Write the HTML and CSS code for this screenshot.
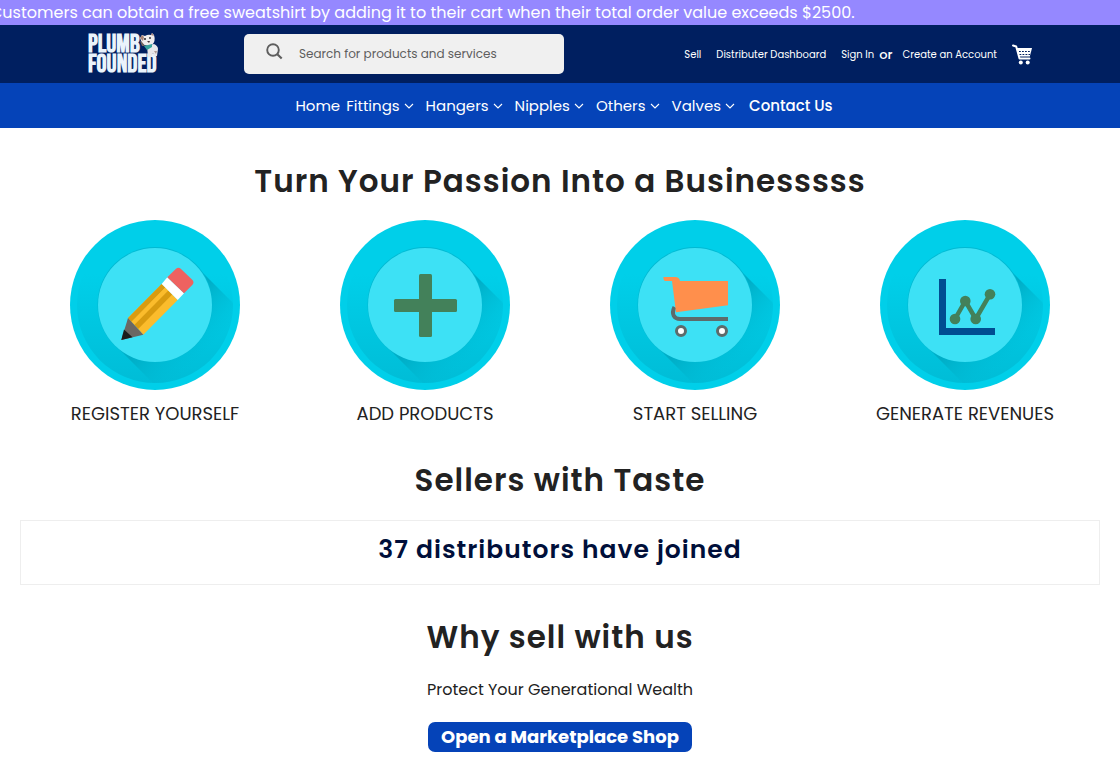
FILE: index.html
```html
<!DOCTYPE html>
<html lang="en">
<head>
<meta charset="utf-8">
<meta name="viewport" content="width=device-width, initial-scale=1">
<title>Plumb Founded</title>
<link rel="stylesheet" href="styles.css">
</head>
<body>
<svg class="defs" aria-hidden="true">
  <defs>
    <linearGradient id="ring" x1="0" y1="0" x2="0" y2="1">
      <stop offset="0.3" stop-color="#00cfe9"/>
      <stop offset="1" stop-color="#00bdd7"/>
    </linearGradient>
    <linearGradient id="shade" gradientUnits="userSpaceOnUse" x1="85" y1="85" x2="134" y2="134">
      <stop offset="0.3" stop-color="#00adc6"/>
      <stop offset="1" stop-color="#00bdd7" stop-opacity="0"/>
    </linearGradient>
    <clipPath id="rim"><circle cx="85" cy="85" r="78"/></clipPath>
    <symbol id="disc" viewBox="0 0 170 170">
      <circle cx="85" cy="85" r="85" fill="#00cfe9"/>
      <circle cx="85" cy="85" r="78" fill="url(#ring)"/>
      <path d="M125 45L185 105V185H105L45 125Z" fill="url(#shade)" clip-path="url(#rim)"/>
      <circle cx="85" cy="84.500" r="57.500" fill="#00b9d2"/>
      <circle cx="85" cy="85" r="57" fill="#3de1f5"/>
    </symbol>
    <symbol id="chevron" viewBox="0 0 10 6">
      <path d="M1 1L5 5L9 1" fill="none" stroke="currentColor" stroke-width="1.100"/>
    </symbol>
  </defs>
</svg>

<p class="promo">Customers can obtain a free sweatshirt by adding it to their cart when their total order value exceeds $2500.</p>

<header class="header">
  <a class="logo" href="#" aria-label="Plumb Founded">
    <span>PLUMB</span>
    <span>FOUNDED</span>
    <svg class="mascot" viewBox="0 0 20 24" aria-hidden="true">
      <path d="M8 13L15 11Q19 13 19 16L18 23H15L14 20L12 24H9Z" fill="#e9e7ea"/>
      <path d="M1 5L3 2L6 3Q9 1 12 2L13 0L15 2Q17 8 13 12Q6 14 3 10Z" fill="#f1eded"/>
      <path d="M1 5L3 2L5 4L4 8ZM12 2L13 0L15 3Z" fill="#a98375"/>
      <path d="M1 8L3 9L6 13L3 13Z" fill="#776761"/>
      <path d="M5 13L13 11L13 14L8 17Z" fill="#38a39c"/>
      <path d="M15 18L18 18L17 21Z" fill="#ae9b94"/>
      <circle cx="6" cy="6" r="1" fill="#26242a"/>
      <circle cx="11" cy="5" r=".9" fill="#26242a"/>
      <path d="M8 8L11 8L10 10Z" fill="#443238"/>
    </svg>
  </a>
  <form class="search" role="search">
    <label class="search-label" for="q" aria-label="Search">
      <svg viewBox="0 0 17 17" aria-hidden="true"><circle cx="7" cy="7" r="5.800" fill="none" stroke="#5e5e5e" stroke-width="1.900"/><path d="M11.300 11.300L15.700 15.500" stroke="#5e5e5e" stroke-width="2.200"/></svg>
    </label>
    <input class="search-input" id="q" type="search" placeholder="Search for products and services">
  </form>
  <div class="account">
    <a href="#">Sell</a>
    <a href="#">Distributer Dashboard</a>
    <span class="sign"><a href="#">Sign In</a><span class="or">or</span><a href="#">Create an Account</a></span>
    <a class="cart" href="#" aria-label="Cart">
      <svg viewBox="0 0 20 21" aria-hidden="true">
        <path d="M1 1.500L4.200 2.500L7.500 14.500H17.500" fill="none" stroke="#fff" stroke-width="2" stroke-linecap="round" stroke-linejoin="round"/>
        <path d="M4.500 4H20L17.800 12.500H7Z" fill="#fff"/>
        <path d="M7 7.500H18.500M7.500 10.500H18" stroke="#001f60" stroke-width="1" stroke-dasharray="1.800 1.200"/>
        <circle cx="8.800" cy="18.500" r="2" fill="#fff"/><circle cx="15.700" cy="18.500" r="2" fill="#fff"/>
      </svg>
    </a>
  </div>
</header>

<nav class="nav" aria-label="Main">
  <a class="home" href="#">Home</a>
  <button type="button">Fittings<svg viewBox="0 0 10 6"><use href="#chevron"/></svg></button>
  <button type="button">Hangers<svg viewBox="0 0 10 6"><use href="#chevron"/></svg></button>
  <button type="button">Nipples<svg viewBox="0 0 10 6"><use href="#chevron"/></svg></button>
  <button type="button">Others<svg viewBox="0 0 10 6"><use href="#chevron"/></svg></button>
  <button type="button">Valves<svg viewBox="0 0 10 6"><use href="#chevron"/></svg></button>
  <a class="contact" href="#">Contact Us</a>
</nav>

<main class="main">
  <h1 class="title">Turn Your Passion Into a Businesssss</h1>
  <ul class="steps">
    <li class="step">
      <svg viewBox="0 0 170 170" aria-hidden="true">
        <use href="#disc"/>
        <path d="M58 98L91.700 64L107.700 80L73.300 114.700Z" fill="#fbbc2c"/>
        <path d="M58 98L91.700 64L95.300 67.600L61.600 101.800Z" fill="#d99b10"/>
        <path d="M61.600 101.800L95.300 67.600L98.300 70.600L64.500 104.800Z" fill="#fbbc2c"/>
        <path d="M64.500 104.800L98.300 70.600L102.200 74.500L68.200 108.900Z" fill="#d99b10"/>
        <path d="M58 98L73.300 114.700L51.300 120Z" fill="#6b6763"/>
        <path d="M54 109.500L62.500 117.300L51.300 120Z" fill="#1c1c1a"/>
        <path d="M91.700 64L97.300 57.300L114 73.300L107.700 80Z" fill="#fff"/>
        <path d="M97.300 57.300L106 48.700Q108.700 46.700 111 49L122.500 60Q124.500 62.500 122.500 64.700L114 73.300Z" fill="#ee6260"/>
      </svg>
      REGISTER YOURSELF
    </li>
    <li class="step">
      <svg viewBox="0 0 170 170" aria-hidden="true">
        <use href="#disc"/>
        <rect x="79" y="54" width="13" height="63" rx="1.500" fill="#43815a"/>
        <rect x="54" y="79" width="63" height="13" rx="1.500" fill="#43815a"/>
      </svg>
      ADD PRODUCTS
    </li>
    <li class="step">
      <svg viewBox="0 0 170 170" aria-hidden="true">
        <use href="#disc"/>
        <path d="M64.500 87C61 94 64 99 70 99H118" fill="none" stroke="#5d6b6b" stroke-width="4"/>
        <path d="M53.300 57H66Q69.500 57.500 70 61H118V85.300L66 92.300L62 61H55Q53.300 60 53.300 57Z" fill="#ff8f4c"/>
        <circle cx="71" cy="111" r="4.500" fill="#fff" stroke="#5d6b6b" stroke-width="3"/>
        <circle cx="112" cy="111" r="4.500" fill="#fff" stroke="#5d6b6b" stroke-width="3"/>
      </svg>
      START SELLING
    </li>
    <li class="step">
      <svg viewBox="0 0 170 170" aria-hidden="true">
        <use href="#disc"/>
        <path d="M59 59H66V108H115V115H59Z" fill="#004d91"/>
        <path d="M75 99L85.300 81L95.700 99L110 74.300" fill="none" stroke="#43815a" stroke-width="4.500"/>
        <g fill="#43815a"><circle cx="75" cy="99" r="5.300"/><circle cx="85.300" cy="81" r="5.300"/><circle cx="95.700" cy="99" r="5.300"/><circle cx="110" cy="74.300" r="5.300"/></g>
      </svg>
      GENERATE REVENUES
    </li>
  </ul>

  <h2 class="title">Sellers with Taste</h2>
  <p class="joined">37 distributors have joined</p>

  <h2 class="title">Why sell with us</h2>
  <p class="tagline">Protect Your Generational Wealth</p>
  <button class="open-shop" type="button">Open a Marketplace Shop</button>
</main>
</body>
</html>
```

FILE: styles.css
```css
* {
  box-sizing: border-box;
}

body {
  margin: 0;
  background: #fff;
  color: #222;
  font-family: Poppins, Inter, "Open Sans", sans-serif;
}

a {
  color: inherit;
  text-decoration: none;
}

button,
input {
  font-family: inherit;
}

button {
  border: 0;
  color: #fff;
  cursor: pointer;
}

.defs {
  position: absolute;
  width: 0;
  height: 0;
}

.promo {
  margin: 0;
  overflow: hidden;
  background: #9588ff;
  color: #fff;
  font-size: 16px;
  line-height: 25px;
  text-indent: -10px;
  white-space: nowrap;
}

.header {
  display: flex;
  align-items: center;
  padding: 8px 88px;
  background: #001f60;
  color: #fff;
}

.logo {
  position: relative;
  display: flex;
  flex-direction: column;
  flex: none;
  width: 72px;
  margin-right: 84px;
  padding-top: 2px;
  color: #eaf3fb;
  font-family: "Bebas Neue", "Liberation Sans Narrow", sans-serif;
  font-size: 25px;
  font-weight: 700;
  line-height: 20px;
}

.mascot {
  position: absolute;
  top: 0;
  right: 1px;
  width: 20px;
  height: 24px;
}

.search {
  display: flex;
  align-items: center;
  flex: 0 1 320px;
  height: 40px;
  padding-left: 22px;
  border-radius: 5px;
  background: #f0f0f0;
}

.search-label {
  display: flex;
  padding-bottom: 6px;
}

.search-label svg {
  width: 17px;
  height: 17px;
}

.search-input {
  flex: 1;
  min-width: 0;
  padding: 0 16px;
  border: 0;
  outline: 0;
  background: none;
  color: #5e5e5e;
  font-size: 12px;
}

.search-input::placeholder {
  color: #5e5e5e;
}

.account {
  display: flex;
  align-items: center;
  gap: 15px;
  margin-left: auto;
  padding-top: 1px;
  font-size: 10px;
  line-height: 20px;
  white-space: nowrap;
}

.sign {
  display: flex;
  align-items: center;
}

.or {
  padding: 0 10px 0 5px;
  font-size: 13px;
  font-weight: 500;
}

.cart svg {
  display: block;
  width: 20px;
  height: 21px;
}

.nav {
  display: flex;
  align-items: center;
  justify-content: center;
  gap: 12px;
  height: 45px;
  padding-left: 8px;
  background: #0543b8;
  color: #fff;
  font-size: 15px;
}

.nav button {
  display: flex;
  align-items: center;
  gap: 4px;
  padding: 0;
  background: none;
  font-size: 15px;
}

.nav button svg {
  width: 10px;
  height: 6px;
}

.home {
  margin-right: -6px;
}

.contact {
  margin-left: 2px;
  font-weight: 500;
}

.main {
  display: flex;
  flex-direction: column;
  align-items: center;
  padding: 29px 20px 10px;
}

.title {
  margin: 0;
  font-size: 31px;
  font-weight: 600;
  letter-spacing: 1px;
  line-height: 48px;
  text-align: center;
}

.steps {
  display: grid;
  grid-template-columns: repeat(4, 1fr);
  width: 100%;
  margin: 0 0 28px;
  padding: 15px 0 0;
  list-style: none;
}

.step {
  display: flex;
  flex-direction: column;
  align-items: center;
  gap: 10px;
  font-size: 18px;
  line-height: 28px;
  text-align: center;
}

.step svg {
  width: 170px;
  height: 170px;
}

.joined {
  width: 100%;
  margin: 16px 0 28px;
  padding: 9px 0 14px;
  border: 1px solid #eee;
  color: #000f3a;
  font-size: 25px;
  font-weight: 600;
  letter-spacing: 1px;
  line-height: 40px;
  text-align: center;
}

.tagline {
  margin: 17px 0 20px;
  font-size: 16px;
  line-height: 24px;
}

.open-shop {
  padding: 0 13px;
  border-radius: 7px;
  background: #0543b8;
  font-size: 18px;
  font-weight: 700;
  line-height: 30px;
}
```
